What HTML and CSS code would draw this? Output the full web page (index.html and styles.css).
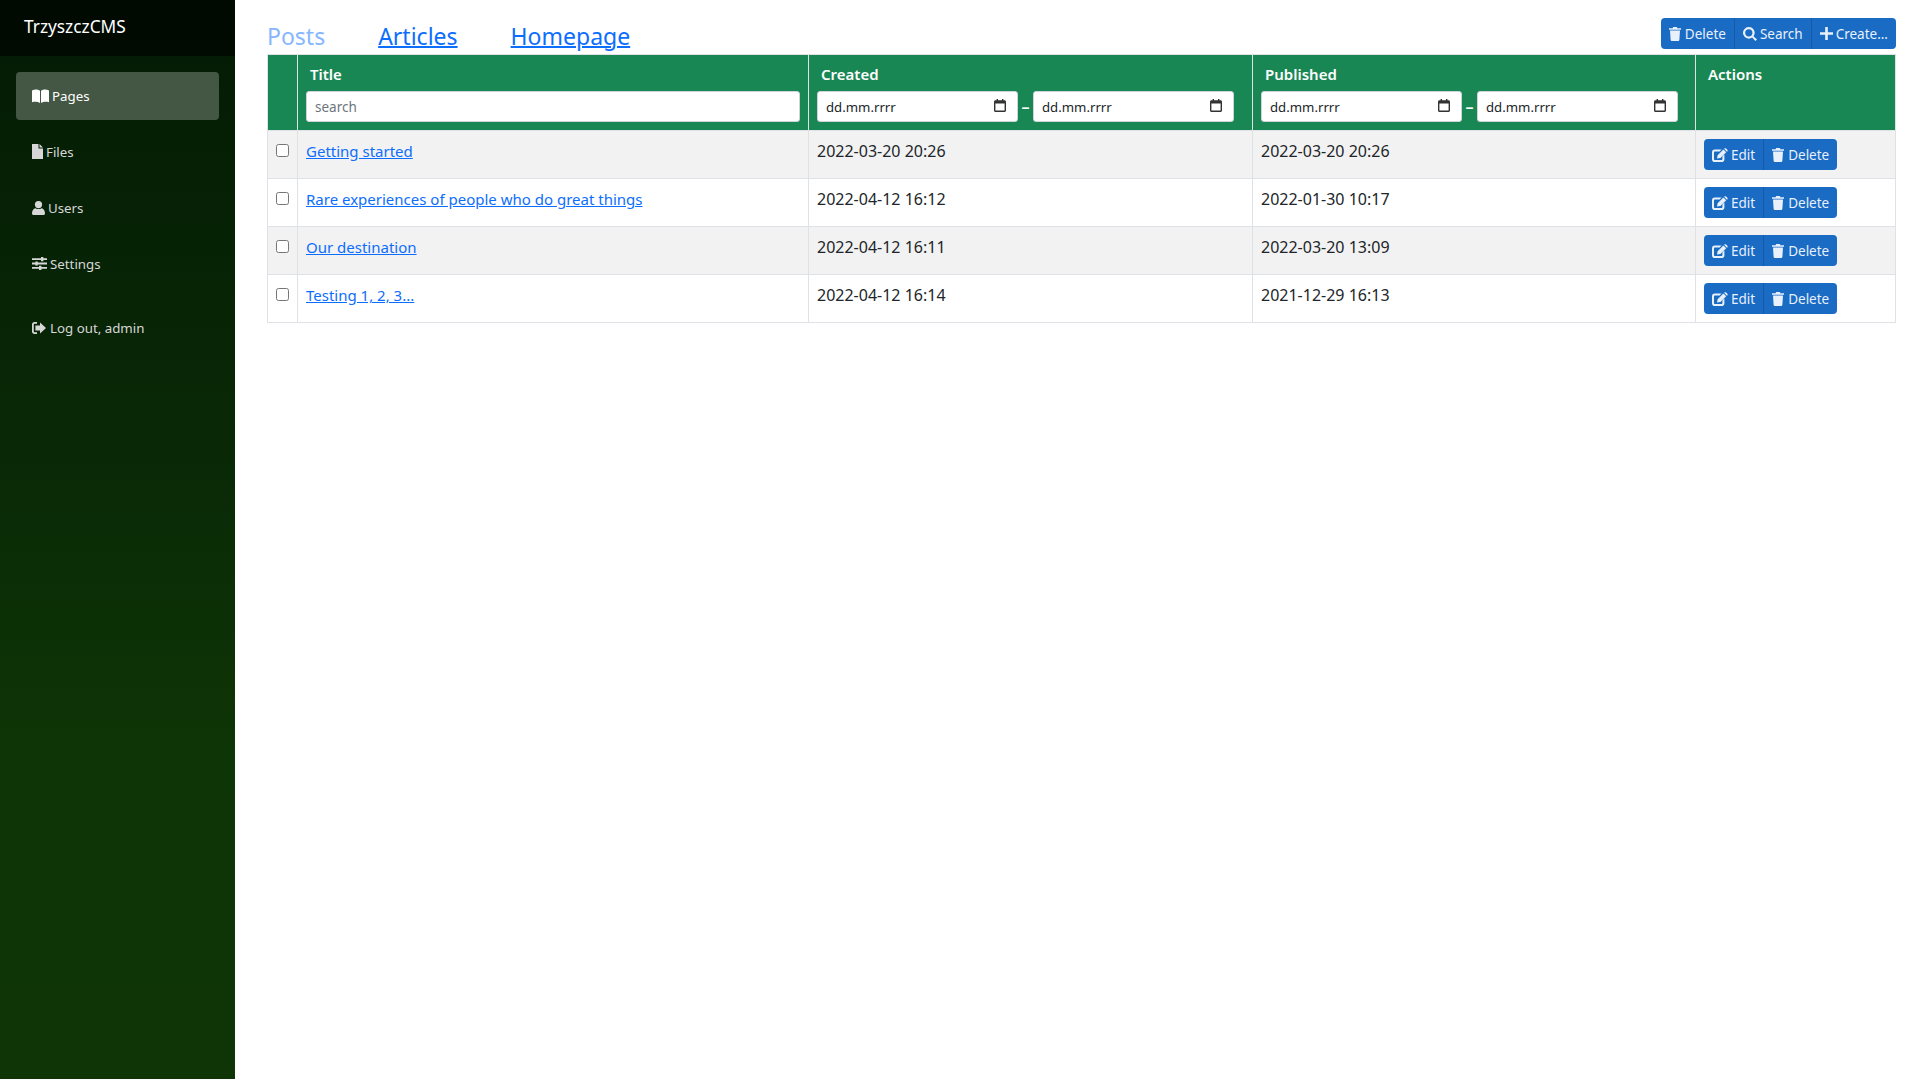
FILE: index.html
```html
<!DOCTYPE html>
<html lang="en">
<head>
  <meta charset="UTF-8" />
  <title>TrzyszczCMS</title>
  <link rel="stylesheet" href="styles.css">
</head>
<body>
  <svg class="icon-defs" width="0" height="0">
    <defs>
      <symbol id="i-book" viewBox="0 0 17 14"><path d="M0 1.4C2.8.2 6 .4 8 1.8V14C6 12.8 2.8 12.6 0 13.2ZM17 1.4C14.2.2 11 .4 9 1.8V14c2-1.2 5.2-1.4 8-.8Z"/></symbol>
      <symbol id="i-file" viewBox="0 0 11 15"><path d="M0 0H6.5V4.5H11V15H0ZM7.5 0 11 3.5H7.5Z"/></symbol>
      <symbol id="i-user" viewBox="0 0 13 14"><circle cx="6.5" cy="3.6" r="3.6"/><path d="M0 12.5C0 9.6 1.4 7.6 3.4 7.2 5.4 8.4 7.6 8.4 9.6 7.2 11.6 7.6 13 9.6 13 12.5 13 13.4 12.4 14 11.5 14H1.5C.6 14 0 13.4 0 12.5Z"/></symbol>
      <symbol id="i-sliders" viewBox="0 0 15 13"><path d="M0 1.2H9V0H11.4V1.2H15V3H11.4V4.2H9V3H0ZM0 5.6H3.4V4.4H5.8V5.6H15V7.4H5.8V8.6H3.4V7.4H0ZM0 10H7V8.8H9.4V10H15V11.8H9.4V13H7V11.8H0Z"/></symbol>
      <symbol id="i-logout" viewBox="0 0 14 12"><path d="M5 0H2.5C1 0 0 1 0 2.5V9.5C0 11 1 12 2.5 12H5V10.2H2.8C2.2 10.2 1.8 9.8 1.8 9.2V2.8C1.8 2.2 2.2 1.8 2.8 1.8H5ZM8 .6 14 6 8 11.4V8.4H3.4V3.6H8Z"/></symbol>
      <symbol id="i-trash" viewBox="0 0 12 14"><path d="M4.2 0H7.8L8.4 1.2H12V2.8H0V1.2H3.6ZM1 3.4H11L10.4 12.7C10.3 13.5 9.8 14 9 14H3C2.2 14 1.7 13.5 1.6 12.7Z"/></symbol>
      <symbol id="i-search" viewBox="0 0 14 14"><path fill-rule="evenodd" d="M5.8 0A5.8 5.8 0 0 1 10.5 9.2L14 12.4 12.4 14 9.2 10.5A5.8 5.8 0 1 1 5.8 0ZM5.8 2.2A3.6 3.6 0 1 0 5.8 9.4 3.6 3.6 0 0 0 5.8 2.2Z"/></symbol>
      <symbol id="i-plus" viewBox="0 0 13 13"><path d="M5.2 0H7.8V5.2H13V7.8H7.8V13H5.2V7.8H0V5.2H5.2Z"/></symbol>
      <symbol id="i-edit" viewBox="0 0 16 14"><path d="M2.6 1.6H9.6L7.6 3.6H3C2.4 3.6 2 4 2 4.6V11C2 11.6 2.4 12 3 12H9.4C10 12 10.4 11.6 10.4 11V8.4L12.4 6.4V11.4C12.4 12.9 11.3 14 9.8 14H2.6C1.1 14 0 12.9 0 11.4V4.2C0 2.7 1.1 1.6 2.6 1.6ZM11.4 1.4 14.2 4.2 8.4 10 5 10.6 5.6 7.2ZM12.4.5C12.9 0 13.6 0 14.1.5L15.3 1.7C15.8 2.2 15.8 2.9 15.3 3.4L15 3.7 12.1 .8Z"/></symbol>
      <symbol id="i-calendar" viewBox="0 0 12 13"><path fill-rule="evenodd" d="M2.6 0H4V1.2H8V0H9.4V1.2H10.5C11.3 1.2 12 1.9 12 2.7V11.5C12 12.3 11.3 13 10.5 13H1.5C.7 13 0 12.3 0 11.5V2.7C0 1.9.7 1.2 1.5 1.2H2.6ZM1.4 4.6V11.2C1.4 11.4 1.6 11.6 1.8 11.6H10.2C10.4 11.6 10.6 11.4 10.6 11.2V4.6Z"/></symbol>
    </defs>
  </svg>

  <div class="layout">
    <!-- Sidebar -->
    <aside class="sidebar">
      <div class="brand">TrzyszczCMS</div>
      <nav class="nav">
        <a class="nav-link active" href="#"><svg class="icon ic-book"><use href="#i-book"/></svg>Pages</a>
        <a class="nav-link" href="#"><svg class="icon ic-file"><use href="#i-file"/></svg>Files</a>
        <a class="nav-link" href="#"><svg class="icon ic-user"><use href="#i-user"/></svg>Users</a>
        <a class="nav-link" href="#"><svg class="icon ic-sliders"><use href="#i-sliders"/></svg>Settings</a>
        <a class="nav-link logout" href="#"><svg class="icon ic-logout"><use href="#i-logout"/></svg>Log out, admin</a>
      </nav>
    </aside>

    <main class="content">
      <div class="topbar">
        <div class="tabs">
          <span class="tab current">Posts</span>
          <a class="tab" href="#">Articles</a>
          <a class="tab" href="#">Homepage</a>
        </div>
        <div class="btn-group">
          <button class="btn"><svg class="icon ic-trash"><use href="#i-trash"/></svg>Delete</button>
          <button class="btn"><svg class="icon ic-search"><use href="#i-search"/></svg>Search</button>
          <button class="btn"><svg class="icon ic-plus"><use href="#i-plus"/></svg>Create...</button>
        </div>
      </div>

      <table class="posts">
        <colgroup>
          <col class="col-check"><col class="col-title"><col class="col-created"><col class="col-published"><col class="col-actions">
        </colgroup>
        <thead>
          <tr>
            <th></th>
            <th>
              <div class="th-label">Title</div>
              <input class="filter" placeholder="search">
            </th>
            <th>
              <div class="th-label">Created</div>
              <div class="date-range">
                <div class="date-input"><span>dd.mm.rrrr</span><svg class="ic-calendar"><use href="#i-calendar"/></svg></div>
                <span class="dash">–</span>
                <div class="date-input"><span>dd.mm.rrrr</span><svg class="ic-calendar"><use href="#i-calendar"/></svg></div>
              </div>
            </th>
            <th>
              <div class="th-label">Published</div>
              <div class="date-range">
                <div class="date-input"><span>dd.mm.rrrr</span><svg class="ic-calendar"><use href="#i-calendar"/></svg></div>
                <span class="dash">–</span>
                <div class="date-input"><span>dd.mm.rrrr</span><svg class="ic-calendar"><use href="#i-calendar"/></svg></div>
              </div>
            </th>
            <th><div class="th-label">Actions</div></th>
          </tr>
        </thead>
        <tbody>
          <tr>
            <td><input type="checkbox"></td>
            <td><a href="#">Getting started</a></td>
            <td class="date">2022-03-20 20:26</td>
            <td class="date">2022-03-20 20:26</td>
            <td><div class="btn-group">
              <button class="btn"><svg class="icon ic-edit"><use href="#i-edit"/></svg>Edit</button>
              <button class="btn"><svg class="icon ic-trash"><use href="#i-trash"/></svg>Delete</button>
            </div></td>
          </tr>
          <tr>
            <td><input type="checkbox"></td>
            <td><a href="#">Rare experiences of people who do great things</a></td>
            <td class="date">2022-04-12 16:12</td>
            <td class="date">2022-01-30 10:17</td>
            <td><div class="btn-group">
              <button class="btn"><svg class="icon ic-edit"><use href="#i-edit"/></svg>Edit</button>
              <button class="btn"><svg class="icon ic-trash"><use href="#i-trash"/></svg>Delete</button>
            </div></td>
          </tr>
          <tr>
            <td><input type="checkbox"></td>
            <td><a href="#">Our destination</a></td>
            <td class="date">2022-04-12 16:11</td>
            <td class="date">2022-03-20 13:09</td>
            <td><div class="btn-group">
              <button class="btn"><svg class="icon ic-edit"><use href="#i-edit"/></svg>Edit</button>
              <button class="btn"><svg class="icon ic-trash"><use href="#i-trash"/></svg>Delete</button>
            </div></td>
          </tr>
          <tr>
            <td><input type="checkbox"></td>
            <td><a href="#">Testing 1, 2, 3...</a></td>
            <td class="date">2022-04-12 16:14</td>
            <td class="date">2021-12-29 16:13</td>
            <td><div class="btn-group">
              <button class="btn"><svg class="icon ic-edit"><use href="#i-edit"/></svg>Edit</button>
              <button class="btn"><svg class="icon ic-trash"><use href="#i-trash"/></svg>Delete</button>
            </div></td>
          </tr>
        </tbody>
      </table>
    </main>
  </div>
</body>
</html>
```

FILE: styles.css
```css
* {
  box-sizing: border-box;
}

body {
  margin: 0;
  font-family: "Noto Sans", sans-serif;
  font-size: 15px;
  color: #212529;
  background: #fff;
}

.icon-defs {
  display: block;
  height: 0;
}

.layout {
  display: flex;
  height: 1079px;
  overflow: hidden;
}

/* Sidebar */
.sidebar {
  width: 235px;
  flex-shrink: 0;
  background: linear-gradient(#031a04 0, #0a2b06 500px, #0e3506 750px, #0f3506 100%);
}

.brand {
  height: 56px;
  padding: 15px 24px 0;
  font-size: 17.3px;
  color: #fff;
  background: rgba(0, 0, 0, 0.6);
}

.nav {
  display: flex;
  flex-direction: column;
  gap: 8px;
  padding: 16px;
}

.nav-link {
  display: flex;
  align-items: center;
  height: 48px;
  padding: 0 16px 1px;
  border-radius: 4px;
  font-size: 13.3px;
  color: #d7d7d7;
  text-decoration: none;
}

.nav-link.active {
  background: #435744;
  color: #fff;
}

.nav-link.logout {
  margin-top: 8px;
}

.icon {
  fill: currentColor;
  flex-shrink: 0;
  margin-right: 3px;
}

.ic-book { width: 17px; height: 14px; }
.ic-file { width: 11px; height: 15px; }
.ic-user { width: 13px; height: 14px; }
.ic-sliders { width: 15px; height: 13px; }
.ic-logout { width: 14px; height: 12px; margin-right: 4px; }
.ic-trash { width: 12px; height: 14px; margin-right: 4px; }
.ic-search { width: 14px; height: 14px; }
.ic-plus { width: 13px; height: 13px; }
.ic-edit { width: 16px; height: 14px; }

/* Main */
.content {
  flex: 1;
  padding: 18px 24px 0 32px;
}

.topbar {
  display: flex;
  justify-content: space-between;
  align-items: flex-end;
  height: 36px;
}

.tabs {
  display: flex;
  gap: 53px;
  font-size: 23px;
  line-height: 36px;
}

.tab {
  color: #0d6efd;
  text-decoration-thickness: 2px;
}

.tab.current {
  color: #86b7fe;
}

.btn-group {
  display: inline-flex;
  border-radius: 4px;
  overflow: hidden;
}

.topbar .btn-group {
  margin-bottom: 5px;
}

.btn {
  display: flex;
  align-items: center;
  height: 31px;
  padding: 0 8px;
  border: 0;
  background: #1a6bc4;
  color: #e8f0fa;
  font-family: inherit;
  font-size: 13.5px;
  white-space: nowrap;
}

.btn + .btn {
  border-left: 1px solid #1759a6;
}

.posts {
  width: 1629px;
  border-collapse: collapse;
  table-layout: fixed;
  border: 1px solid #dee2e6;
}

.col-check { width: 30px; }
.col-title { width: 511px; }
.col-created { width: 444px; }
.col-published { width: 443px; }

.posts th {
  background: #198754;
  color: #fff;
  border: 1px solid #dee2e6;
  padding: 8px;
  height: 76px;
  text-align: left;
  vertical-align: top;
}

.th-label {
  padding: 1px 0 0 4px;
  margin-bottom: 7px;
  font-weight: 600;
  font-size: 15px;
  line-height: 20px;
}

.posts td {
  height: 48px;
  padding: 8px;
  border: 1px solid #dee2e6;
  line-height: 24px;
  vertical-align: top;
}

.posts td.date {
  font-size: 16px;
}

.posts tbody tr:nth-child(odd) td {
  background: #f2f2f2;
}

.posts td a {
  color: #0d6efd;
}

.posts td input[type="checkbox"] {
  display: block;
  width: 13px;
  height: 13px;
  margin: 5px 0 0;
}

.filter {
  display: block;
  width: 100%;
  height: 31px;
  padding: 0 8px;
  border: 1px solid #ced4da;
  border-radius: 3px;
  font-family: inherit;
  font-size: 13.5px;
  background: #fff;
}

.filter::placeholder {
  color: #6c757d;
}

.date-range {
  display: flex;
  align-items: center;
}

.date-input {
  display: flex;
  justify-content: space-between;
  align-items: center;
  flex: none;
  width: 201px;
  height: 31px;
  padding: 0 11px 0 8px;
  border: 1px solid #ced4da;
  border-radius: 3px;
  background: #fff;
  color: #212529;
  font-size: 13.2px;
  font-weight: 400;
}

.ic-calendar {
  width: 12px;
  height: 13px;
  fill: #333;
  margin-top: -2px;
}

.dash {
  flex: none;
  width: 15px;
  text-align: center;
  font-size: 16px;
  font-weight: 600;
}
```
